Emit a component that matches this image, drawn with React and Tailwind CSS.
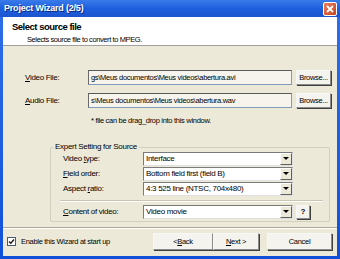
import React from 'react';

const font = { fontFamily: '"Liberation Sans", Arial, sans-serif' };

const U = ({ children }) => <span className="underline underline-offset-1">{children}</span>;

const TextBox = ({ value }) => (
  <div className="w-[204px] h-[15px] bg-[#F6F4EC] border border-[#7F9DB9] border-t-[#5a5a5a] border-l-[#6a6a6a] px-[2px] text-[7.5px] leading-[13px] overflow-hidden whitespace-nowrap text-black">
    {value}
  </div>
);

const Btn = ({ children, className = '' }) => (
  <div
    className={`flex items-center justify-center bg-[#F4F3EE] border border-[#f8f8f8] border-r-[#8a8a8a] border-b-[#8a8a8a] shadow-[1px_1px_0_#404040] text-[7.5px] text-black ${className}`}
  >
    {children}
  </div>
);

const Combo = ({ value }) => (
  <div className="w-[150px] h-[14px] flex bg-white border border-[#7a7a7a] border-r-[#e0e0e0] border-b-[#e0e0e0]">
    <div className="flex-1 px-[2px] text-[8px] leading-[12px] whitespace-nowrap overflow-hidden">{value}</div>
    <div className="w-[12px] h-[12px] bg-[#ECE9D8] border border-white border-r-[#606060] border-b-[#606060] flex items-center justify-center">
      <svg width="6" height="4" viewBox="0 0 6 4">
        <path d="M0 0h6L3 3z" fill="#000" />
      </svg>
    </div>
  </div>
);

const Row = ({ label, children }) => (
  <div className="flex items-center">
    <div className="w-[80px] text-[8px]">{label}</div>
    {children}
  </div>
);

export default function App() {
  return (
    <div style={font} className="w-[340px] h-[259px] flex flex-col bg-gradient-to-b from-[#2F6FE8] to-[#1050D8] text-black tracking-[-0.3px]">
      {/* title bar */}
      <div className="h-[17px] flex items-center justify-between pl-[4px] pr-[3px] bg-gradient-to-b from-[#3A7BEA] via-[#1E5FDD] to-[#1A54D0]">
        <span className="text-white font-bold text-[9px] tracking-[-0.2px] [text-shadow:1px_1px_0_#0a2a80]">Project Wizard (2/5)</span>
        <div className="w-[14px] h-[14px] rounded-[2px] border border-white bg-gradient-to-br from-[#E88060] to-[#C8401C] flex items-center justify-center">
          <svg width="8" height="8" viewBox="0 0 8 8">
            <path d="M1 1L7 7M7 1L1 7" stroke="#fff" strokeWidth="1.8" />
          </svg>
        </div>
      </div>

      <div className="flex-1 mx-[3px] mb-[3px] bg-[#ECE9D8] flex flex-col">
        {/* header */}
        <div className="h-[29px] bg-white border-b border-[#A0A0A0] pl-[9px] pt-[4px]">
          <div className="text-[9.5px] font-bold leading-[12px] tracking-[-0.5px]">Select source file</div>
          <div className="text-[7.5px] leading-[11px] pl-[15px] mt-[1px] tracking-[-0.4px]">Selects source file to convert to MPEG.</div>
        </div>

        {/* body */}
        <div className="flex-1 flex flex-col">
          <div className="pl-[22px] pt-[24px] flex flex-col gap-[8px]">
            <div className="flex items-center">
              <div className="w-[63px] text-[8px]"><U>V</U>ideo File:</div>
              <TextBox value="gs\Meus documentos\Meus videos\abertura.avi" />
              <Btn className="ml-[4px] w-[35px] h-[15px]">Browse...</Btn>
            </div>
            <div className="flex items-center">
              <div className="w-[63px] text-[8px]"><U>A</U>udio File:</div>
              <TextBox value="s\Meus documentos\Meus videos\abertura.wav" />
              <Btn className="ml-[4px] w-[35px] h-[15px]">Browse...</Btn>
            </div>
          </div>
          <div className="pl-[88px] mt-[7px] text-[7.5px] leading-[11px]">* file can be drag_drop into this window.</div>

          {/* group */}
          <div className="relative ml-[47px] mr-[7px] mt-[21px] h-[75px] border border-[#D0D0BF] rounded-[2px] pl-[12px] pt-[4px]">
            <div className="absolute -top-[7px] left-[2px] px-[2px] bg-[#ECE9D8] text-[8px] leading-[12px]">Expert Setting for Source</div>
            <div className="flex flex-col gap-[1px]">
              <Row label={<>Video <U>t</U>ype:</>}><Combo value="Interface" /></Row>
              <Row label={<><U>F</U>ield order:</>}><Combo value="Bottom field first (field B)" /></Row>
              <Row label={<>Aspect <U>r</U>atio:</>}><Combo value="4:3 525 line (NTSC, 704x480)" /></Row>
            </div>
            <div className="h-[2px] border-t border-[#C8C5B2] border-b border-b-white -ml-[3px] mr-[6px] mt-[4px] mb-[3px]"></div>
            <Row label={<><U>C</U>ontent of video:</>}>
              <Combo value="Video movie" />
              <Btn className="ml-[3px] w-[14px] h-[14px] font-bold">?</Btn>
            </Row>
          </div>

          {/* footer */}
          <div className="mt-[5px] h-[2px] border-t border-[#ACA899] border-b border-b-white"></div>
          <div className="flex items-center pt-[4px] pl-[4px] pr-[5px]">
            <div className="w-[9px] h-[9px] border border-[#4a5a70] bg-white flex items-center justify-center">
              <svg width="7" height="7" viewBox="0 0 7 7">
                <path d="M1 3.5L2.8 5.3L6 1.5" stroke="#1a1a1a" strokeWidth="1.4" fill="none" />
              </svg>
            </div>
            <span className="ml-[5px] text-[7.5px]">Enable this Wizard at start up</span>
            <div className="ml-auto flex">
              <Btn className="w-[60px] h-[17px]">&lt; <U>B</U>ack</Btn>
              <Btn className="w-[46px] h-[17px]"><U>N</U>ext &gt;</Btn>
              <Btn className="ml-[8px] w-[65px] h-[17px]">Cancel</Btn>
            </div>
          </div>
        </div>
      </div>
    </div>
  );
}
